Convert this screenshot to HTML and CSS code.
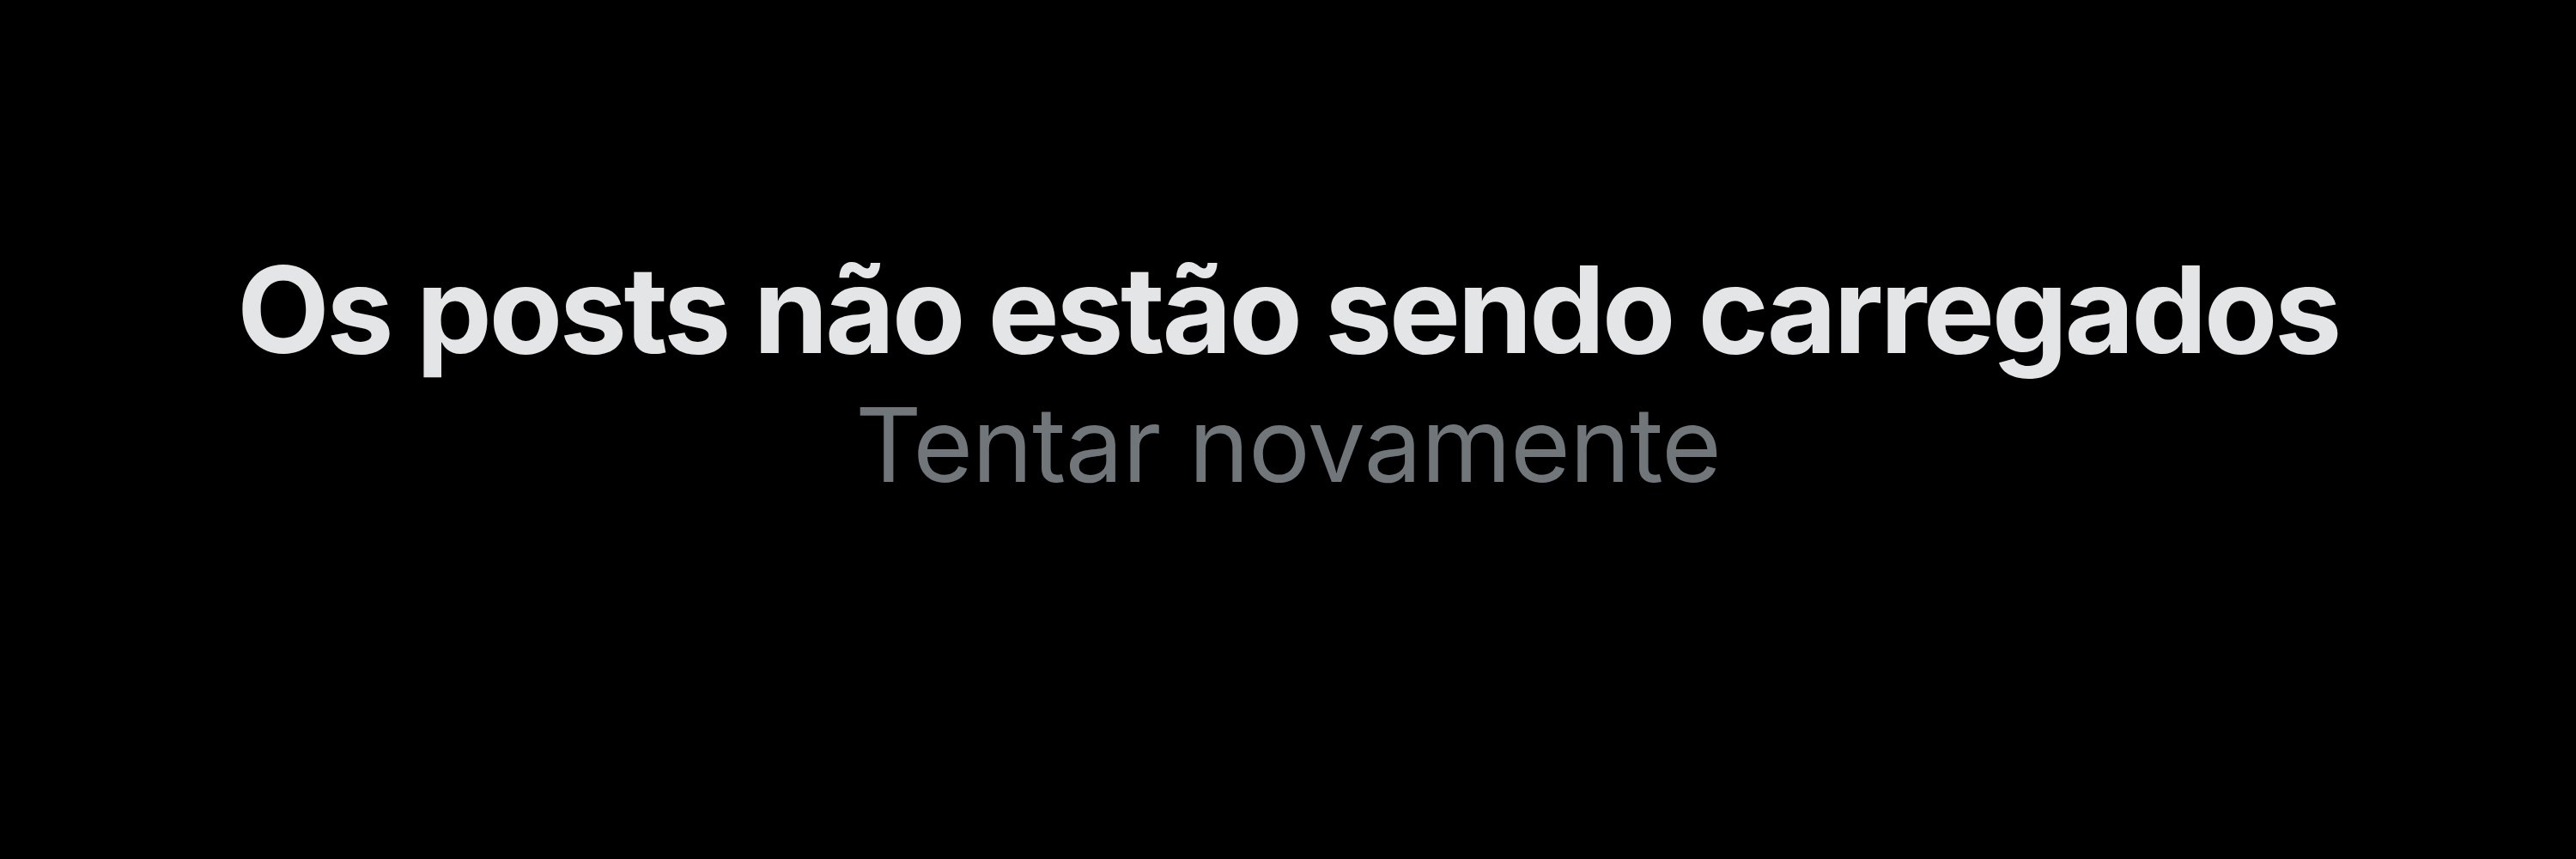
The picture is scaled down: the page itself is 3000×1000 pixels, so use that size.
FILE: index.html
```html
<!DOCTYPE html>
<html lang="pt">
<head>
    <meta charset="UTF-8">
    <title>Erro ao carregar</title>
    <link rel="stylesheet" href="styles.css">
</head>
<body>
<div id="wrapper">
    <div class="empty-state">
        <div class="title">Os posts não estão sendo carregados</div>
        <div class="retry">Tentar novamente</div>
    </div>
</div>
</body>
</html>
```

FILE: styles.css
```css
html, body {
    margin: 0;
    background-color: #000000;
}
#wrapper {
    width: 3000px;
    height: 1000px;
    display: flex;
    justify-content: center;
}
.empty-state {
    display: flex;
    flex-direction: column;
    align-items: center;
    gap: 28px;
    padding-top: 290px;
    font-family: Inter, "Noto Sans", sans-serif;
}
.empty-state .title {
    color: #e3e5e6;
    font-size: 140px;
    font-weight: 700;
    line-height: 1;
    letter-spacing: -3.6px;
}
.empty-state .retry {
    color: #71767b;
    font-size: 120px;
    font-weight: 400;
    line-height: 1;
    letter-spacing: -1px;
}
```
